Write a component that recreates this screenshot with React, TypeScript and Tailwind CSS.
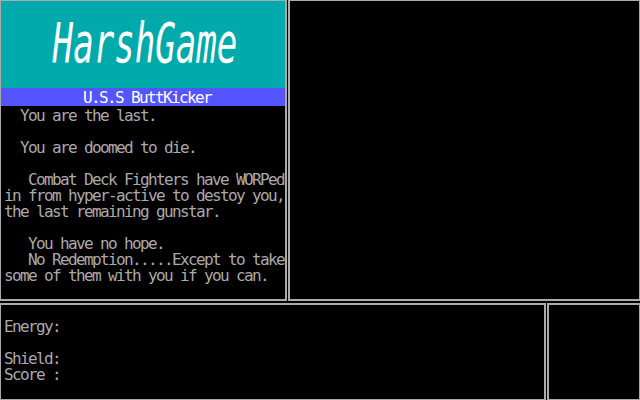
const mono = "font-['DejaVu_Sans_Mono','Liberation_Mono',monospace] text-[16px] leading-[16px] tracking-[-1.633px] whitespace-pre";

const story = [
  "  You are the last.",
  "",
  "  You are doomed to die.",
  "",
  "   Combat Deck Fighters have WORPed",
  "in from hyper-active to destoy you,",
  "the last remaining gunstar.",
  "",
  "   You have no hope.",
  "   No Redemption.....Except to take",
  "some of them with you if you can.",
];

const stats = ["Energy:", "", "Shield:", "Score :"];

export default function App() {
  return (
    <div className="w-[640px] h-[400px] overflow-hidden bg-black">
      <div className="-ml-px -mt-px w-[642px] h-[402px] flex flex-col gap-[2px]">
        {/* top row */}
        <div className="flex gap-px h-[302px]">
          <div className="w-[288px] h-full border-2 border-[#aaaaaa] flex flex-col overflow-hidden">
            <div className="h-[87px] bg-[#00aaaa] flex justify-center pl-[4px] pt-[15px]">
              <span className="inline-block origin-center scale-x-[0.62] font-['DejaVu_Sans_Mono',monospace] italic font-normal text-[55px] leading-none text-white">
                HarshGame
              </span>
            </div>
            <div className={`h-[18px] bg-[#5555ff] pl-[82px] pt-[2px] text-white overflow-hidden ${mono}`}>
              U.S.S ButtKicker
            </div>
            <div className={`pl-[3px] pt-[2px] text-[#aaaaaa] ${mono}`}>
              {story.map((line, i) => (
                <div key={i} className="h-[16px]">{line}</div>
              ))}
            </div>
          </div>
          <div className="flex-1 h-full border-2 border-[#aaaaaa]" />
        </div>

        {/* bottom row */}
        <div className="flex gap-px flex-1">
          <div className={`w-[547px] border-2 border-[#aaaaaa] pl-[3px] pt-[14px] text-[#aaaaaa] ${mono}`}>
            {stats.map((line, i) => (
              <div key={i} className="h-[16px]">{line}</div>
            ))}
          </div>
          <div className="flex-1 border-2 border-[#aaaaaa]" />
        </div>
      </div>
    </div>
  );
}
